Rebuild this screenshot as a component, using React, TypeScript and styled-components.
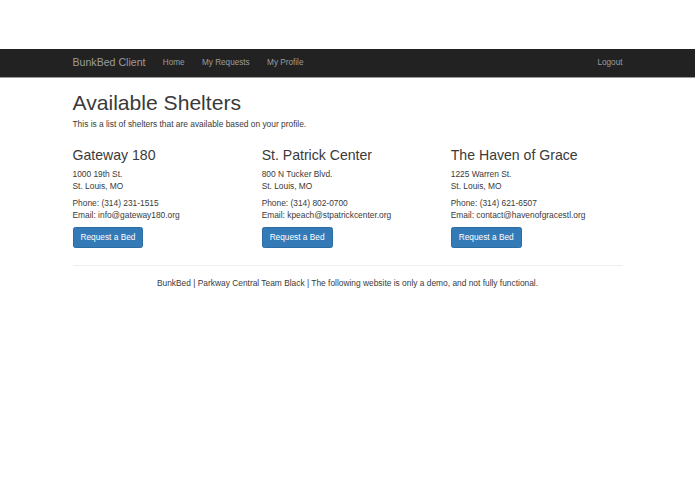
import React from 'react';
import styled, {createGlobalStyle} from 'styled-components';

const shelters = [
  {
    name: 'Gateway 180',
    street: '1000 19th St.',
    city: 'St. Louis, MO',
    phone: '(314) 231-1515',
    email: 'info@gateway180.org',
  },
  {
    name: 'St. Patrick Center',
    street: '800 N Tucker Blvd.',
    city: 'St. Louis, MO',
    phone: '(314) 802-0700',
    email: 'kpeach@stpatrickcenter.org',
  },
  {
    name: 'The Haven of Grace',
    street: '1225 Warren St.',
    city: 'St. Louis, MO',
    phone: '(314) 621-6507',
    email: 'contact@havenofgracestl.org',
  },
];

const App = () => {
  return (
    <>
      <GlobalStyle />
      <Navbar>
        <NavContainer>
          <NavLeft>
            <Brand href='#'>BunkBed Client</Brand>
            <NavLink href='#'>Home</NavLink>
            <NavLink href='#'>My Requests</NavLink>
            <NavLink href='#'>My Profile</NavLink>
          </NavLeft>
          <NavLink href='#' last>Logout</NavLink>
        </NavContainer>
      </Navbar>
      <Container>
        <Title>Available Shelters</Title>
        <Text>This is a list of shelters that are available based on your profile.</Text>
        <Row>
          {shelters.map((el, id) => {
            return (
              <Column key={id}>
                <ShelterName>{el.name}</ShelterName>
                <Text>{el.street}<br />{el.city}</Text>
                <Text>Phone: {el.phone}<br />Email: {el.email}</Text>
                <Text><Button>Request a Bed</Button></Text>
              </Column>
            );
          })}
        </Row>
        <Divider />
        <Footer>
          BunkBed | Parkway Central Team Black | The following website is only a demo, and not fully functional.
        </Footer>
      </Container>
    </>
  );
};

const GlobalStyle = createGlobalStyle`
  body {
    margin: 0;
    padding-top: 49px;
    background: #ffffff;
    color: #3a3a3a;
    font-family: 'Liberation Sans', Arial, sans-serif;
    font-size: 8.4px;
    line-height: 11.6px;
  }
`;

const Navbar = styled.nav`
  height: 28px;
  background: #222222;
  border-bottom: 1px solid #9a9a9a;
`;

const NavContainer = styled.div`
  width: 550px;
  height: 100%;
  margin: 0 auto;
  display: flex;
  align-items: center;
  justify-content: space-between;
`;

const NavLeft = styled.div`
  display: flex;
  align-items: center;
`;

const Brand = styled.a`
  font-size: 10.6px;
  color: #9d9d9d;
  text-decoration: none;
  padding-right: 8.5px;
`;

const NavLink = styled.a<{last?: boolean}>`
  font-size: 8.2px;
  color: #9d9d9d;
  text-decoration: none;
  padding: 0 ${(props) => (props.last ? '0' : '8.7px')};
`;

const Container = styled.main`
  width: 550px;
  margin: 0 auto;
`;

const Title = styled.h1`
  font-size: 21.1px;
  font-weight: 400;
  line-height: 23px;
  margin: 12.6px 0 5.8px;
`;

const Text = styled.p`
  margin: 0 0 5.8px;
`;

const Row = styled.div`
  display: grid;
  grid-template-columns: repeat(3, 1fr);
  margin: 0 -8.7px;
`;

const Column = styled.div`
  padding: 0 8.7px;
`;

const ShelterName = styled.h3`
  font-size: 14.1px;
  font-weight: 400;
  line-height: 15.3px;
  margin: 11.6px 0 5.8px;
`;

const Button = styled.button`
  font-family: inherit;
  font-size: 8.3px;
  line-height: 11.6px;
  padding: 3.5px 7px;
  color: #ffffff;
  background: #337ab7;
  border: 1px solid #2e6da4;
  border-radius: 2.3px;
  cursor: pointer;
`;

const Divider = styled.hr`
  margin: 11.6px 0;
  border: 0;
  border-top: 1px solid #eeeeee;
`;

const Footer = styled.footer`
  text-align: center;
`;

export default App;
